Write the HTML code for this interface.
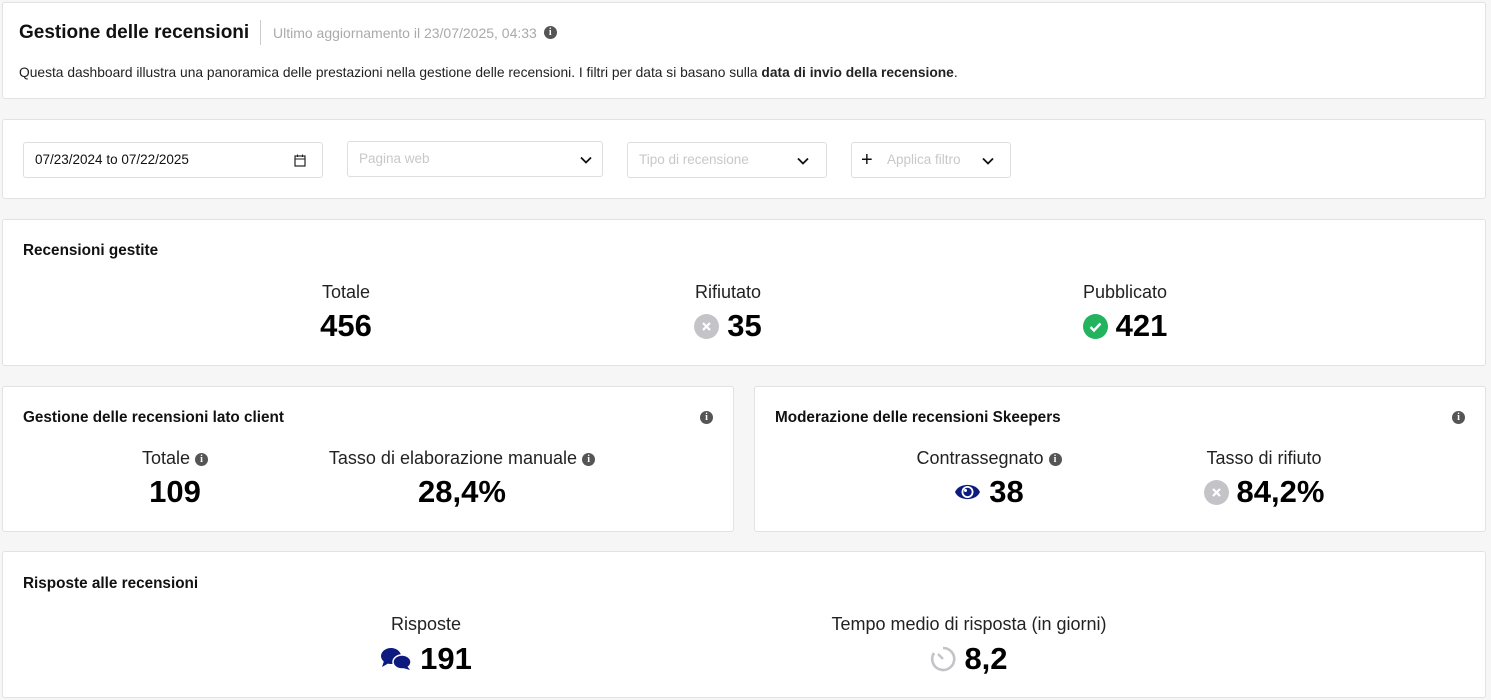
<!DOCTYPE html>
<html><head><meta charset="utf-8"><style>
*{box-sizing:border-box;margin:0;padding:0}
body{width:1491px;height:700px;background:#f6f6f6;font-family:"Liberation Sans",Arial,sans-serif;color:#111;position:relative;overflow:hidden}
.card{position:absolute;background:#fff;border:1px solid #e2e2e2;border-radius:3px}
.a{position:absolute;white-space:nowrap}
.t{font-weight:bold;font-size:15.3px;color:#111}
.lab{position:absolute;width:400px;text-align:center;font-size:18px;color:#222}
.num{position:absolute;width:400px;text-align:center;font-size:31px;font-weight:bold;color:#000;display:flex;justify-content:center;align-items:center;gap:8px;height:36px}
.inp{position:absolute;border:1px solid #dedede;border-radius:3px;background:#fff;height:36px;font-size:13.5px}
.ph{color:#c8c8cc}
.info{display:inline-block;width:13px;height:13px;border-radius:50%;background:#555;color:#fff;font-size:10px;font-weight:bold;text-align:center;line-height:13px;font-family:"Liberation Serif",serif;vertical-align:middle}
</style></head><body>
<div class="card" style="left:2px;top:2px;width:1484px;height:97px"></div>
<div class="a" style="left:19px;top:22px;font-size:19px;font-weight:bold;color:#111">Gestione delle recensioni</div>
<div class="a" style="left:260px;top:20px;width:1px;height:25px;background:#ccc"></div>
<div class="a" style="left:273px;top:25px;font-size:14px;color:#aaa">Ultimo aggiornamento il 23/07/2025, 04:33 <span class="info" style="margin-left:3px;margin-top:-3px">i</span></div>
<div class="a" style="left:19px;top:65px;font-size:13.8px;color:#222">Questa dashboard illustra una panoramica delle prestazioni nella gestione delle recensioni. I filtri per data si basano sulla <b>data di invio della recensione</b>.</div>

<div class="card" style="left:2px;top:119px;width:1484px;height:80px"></div>
<div class="inp" style="left:23px;top:142px;width:300px"><span class="a" style="left:11px;top:9px">07/23/2024 to 07/22/2025</span>
<svg class="a" style="left:270px;top:11px" width="12" height="13" viewBox="0 0 12 13"><rect x="1" y="2" width="10" height="10" fill="none" stroke="#222" stroke-width="1.2"/><line x1="1" y1="5" x2="11" y2="5" stroke="#222"/><line x1="3.5" y1="0.5" x2="3.5" y2="3" stroke="#222"/><line x1="8.5" y1="0.5" x2="8.5" y2="3" stroke="#222"/></svg></div>
<div class="inp" style="left:347px;top:141px;width:256px"><span class="a ph" style="left:11px;top:9px">Pagina web</span>
<svg class="a" style="left:232px;top:14px" width="12" height="8"><path d="M1 1.5L6 6.5L11 1.5" fill="none" stroke="#111" stroke-width="1.8"/></svg></div>
<div class="inp" style="left:627px;top:142px;width:200px"><span class="a ph" style="left:11px;top:9px">Tipo di recensione</span>
<svg class="a" style="left:169px;top:14px" width="12" height="8"><path d="M1 1.5L6 6.5L11 1.5" fill="none" stroke="#111" stroke-width="1.8"/></svg></div>
<div class="inp" style="left:851px;top:142px;width:160px"><span class="a" style="left:9px;top:6px;font-size:20px;color:#111">+</span><span class="a ph" style="left:35px;top:9px">Applica filtro</span>
<svg class="a" style="left:130px;top:14px" width="12" height="8"><path d="M1 1.5L6 6.5L11 1.5" fill="none" stroke="#111" stroke-width="1.8"/></svg></div>

<div class="card" style="left:2px;top:219px;width:1484px;height:147px"></div>
<div class="a t" style="left:23px;top:242px">Recensioni gestite</div>
<div class="lab" style="left:146px;top:282px">Totale</div>
<div class="num" style="left:146px;top:308px">456</div>
<div class="lab" style="left:528px;top:282px">Rifiutato</div>
<div class="num" style="left:528px;top:308px"><svg width="25" height="25"><circle cx="12.5" cy="12.5" r="12.5" fill="#c4c4c8"/><path d="M9 9L16 16M16 9L9 16" stroke="#fff" stroke-width="2.2"/></svg>35</div>
<div class="lab" style="left:925px;top:282px">Pubblicato</div>
<div class="num" style="left:925px;top:308px"><svg width="25" height="25"><circle cx="12.5" cy="12.5" r="12.5" fill="#22b35e"/><path d="M7.5 13L11 16.5L17.5 9.5" fill="none" stroke="#fff" stroke-width="2.4"/></svg>421</div>

<div class="card" style="left:2px;top:386px;width:732px;height:146px"></div>
<div class="a t" style="left:23px;top:409px">Gestione delle recensioni lato client</div>
<span class="info a" style="left:700px;top:411px">i</span>
<div class="lab" style="left:-25px;top:448px">Totale <span class="info">i</span></div>
<div class="num" style="left:-25px;top:474px">109</div>
<div class="lab" style="left:262px;top:448px">Tasso di elaborazione manuale <span class="info">i</span></div>
<div class="num" style="left:262px;top:474px">28,4%</div>

<div class="card" style="left:754px;top:386px;width:732px;height:146px"></div>
<div class="a t" style="left:775px;top:409px">Moderazione delle recensioni Skeepers</div>
<span class="info a" style="left:1452px;top:411px">i</span>
<div class="lab" style="left:789px;top:448px">Contrassegnato <span class="info">i</span></div>
<div class="num" style="left:789px;top:474px"><svg width="27" height="20" viewBox="0 0 27 20"><path d="M1 10C5 0.5 22 0.5 26 10C22 19.5 5 19.5 1 10Z" fill="#0d1a80"/><circle cx="13.5" cy="10" r="6" fill="#fff"/><circle cx="13.5" cy="10" r="4.2" fill="#0d1a80"/><circle cx="11.5" cy="8.5" r="1.5" fill="#fff"/></svg>38</div>
<div class="lab" style="left:1064px;top:448px">Tasso di rifiuto</div>
<div class="num" style="left:1064px;top:474px"><svg width="25" height="25"><circle cx="12.5" cy="12.5" r="12.5" fill="#c4c4c8"/><path d="M9 9L16 16M16 9L9 16" stroke="#fff" stroke-width="2.2"/></svg>84,2%</div>

<div class="card" style="left:2px;top:551px;width:1484px;height:147px"></div>
<div class="a t" style="left:23px;top:575px">Risposte alle recensioni</div>
<div class="lab" style="left:226px;top:614px">Risposte</div>
<div class="num" style="left:226px;top:641px"><svg width="32" height="24" viewBox="0 0 32 24"><ellipse cx="11" cy="9" rx="10" ry="8" fill="#0d1a80"/><path d="M4 14L2 20L9 16Z" fill="#0d1a80"/><ellipse cx="22" cy="15" rx="9" ry="7" fill="#0d1a80" stroke="#fff" stroke-width="1.5"/><path d="M27 19L30 23L23 21Z" fill="#0d1a80"/></svg>191</div>
<div class="lab" style="left:769px;top:614px">Tempo medio di risposta (in giorni)</div>
<div class="num" style="left:769px;top:641px"><svg width="26" height="26" viewBox="0 0 26 26"><path d="M13 2A11 11 0 1 1 4 7" fill="none" stroke="#c4c4c8" stroke-width="2.6"/><path d="M8 8L13 13" stroke="#c4c4c8" stroke-width="2.4"/></svg>8,2</div>
</body></html>
